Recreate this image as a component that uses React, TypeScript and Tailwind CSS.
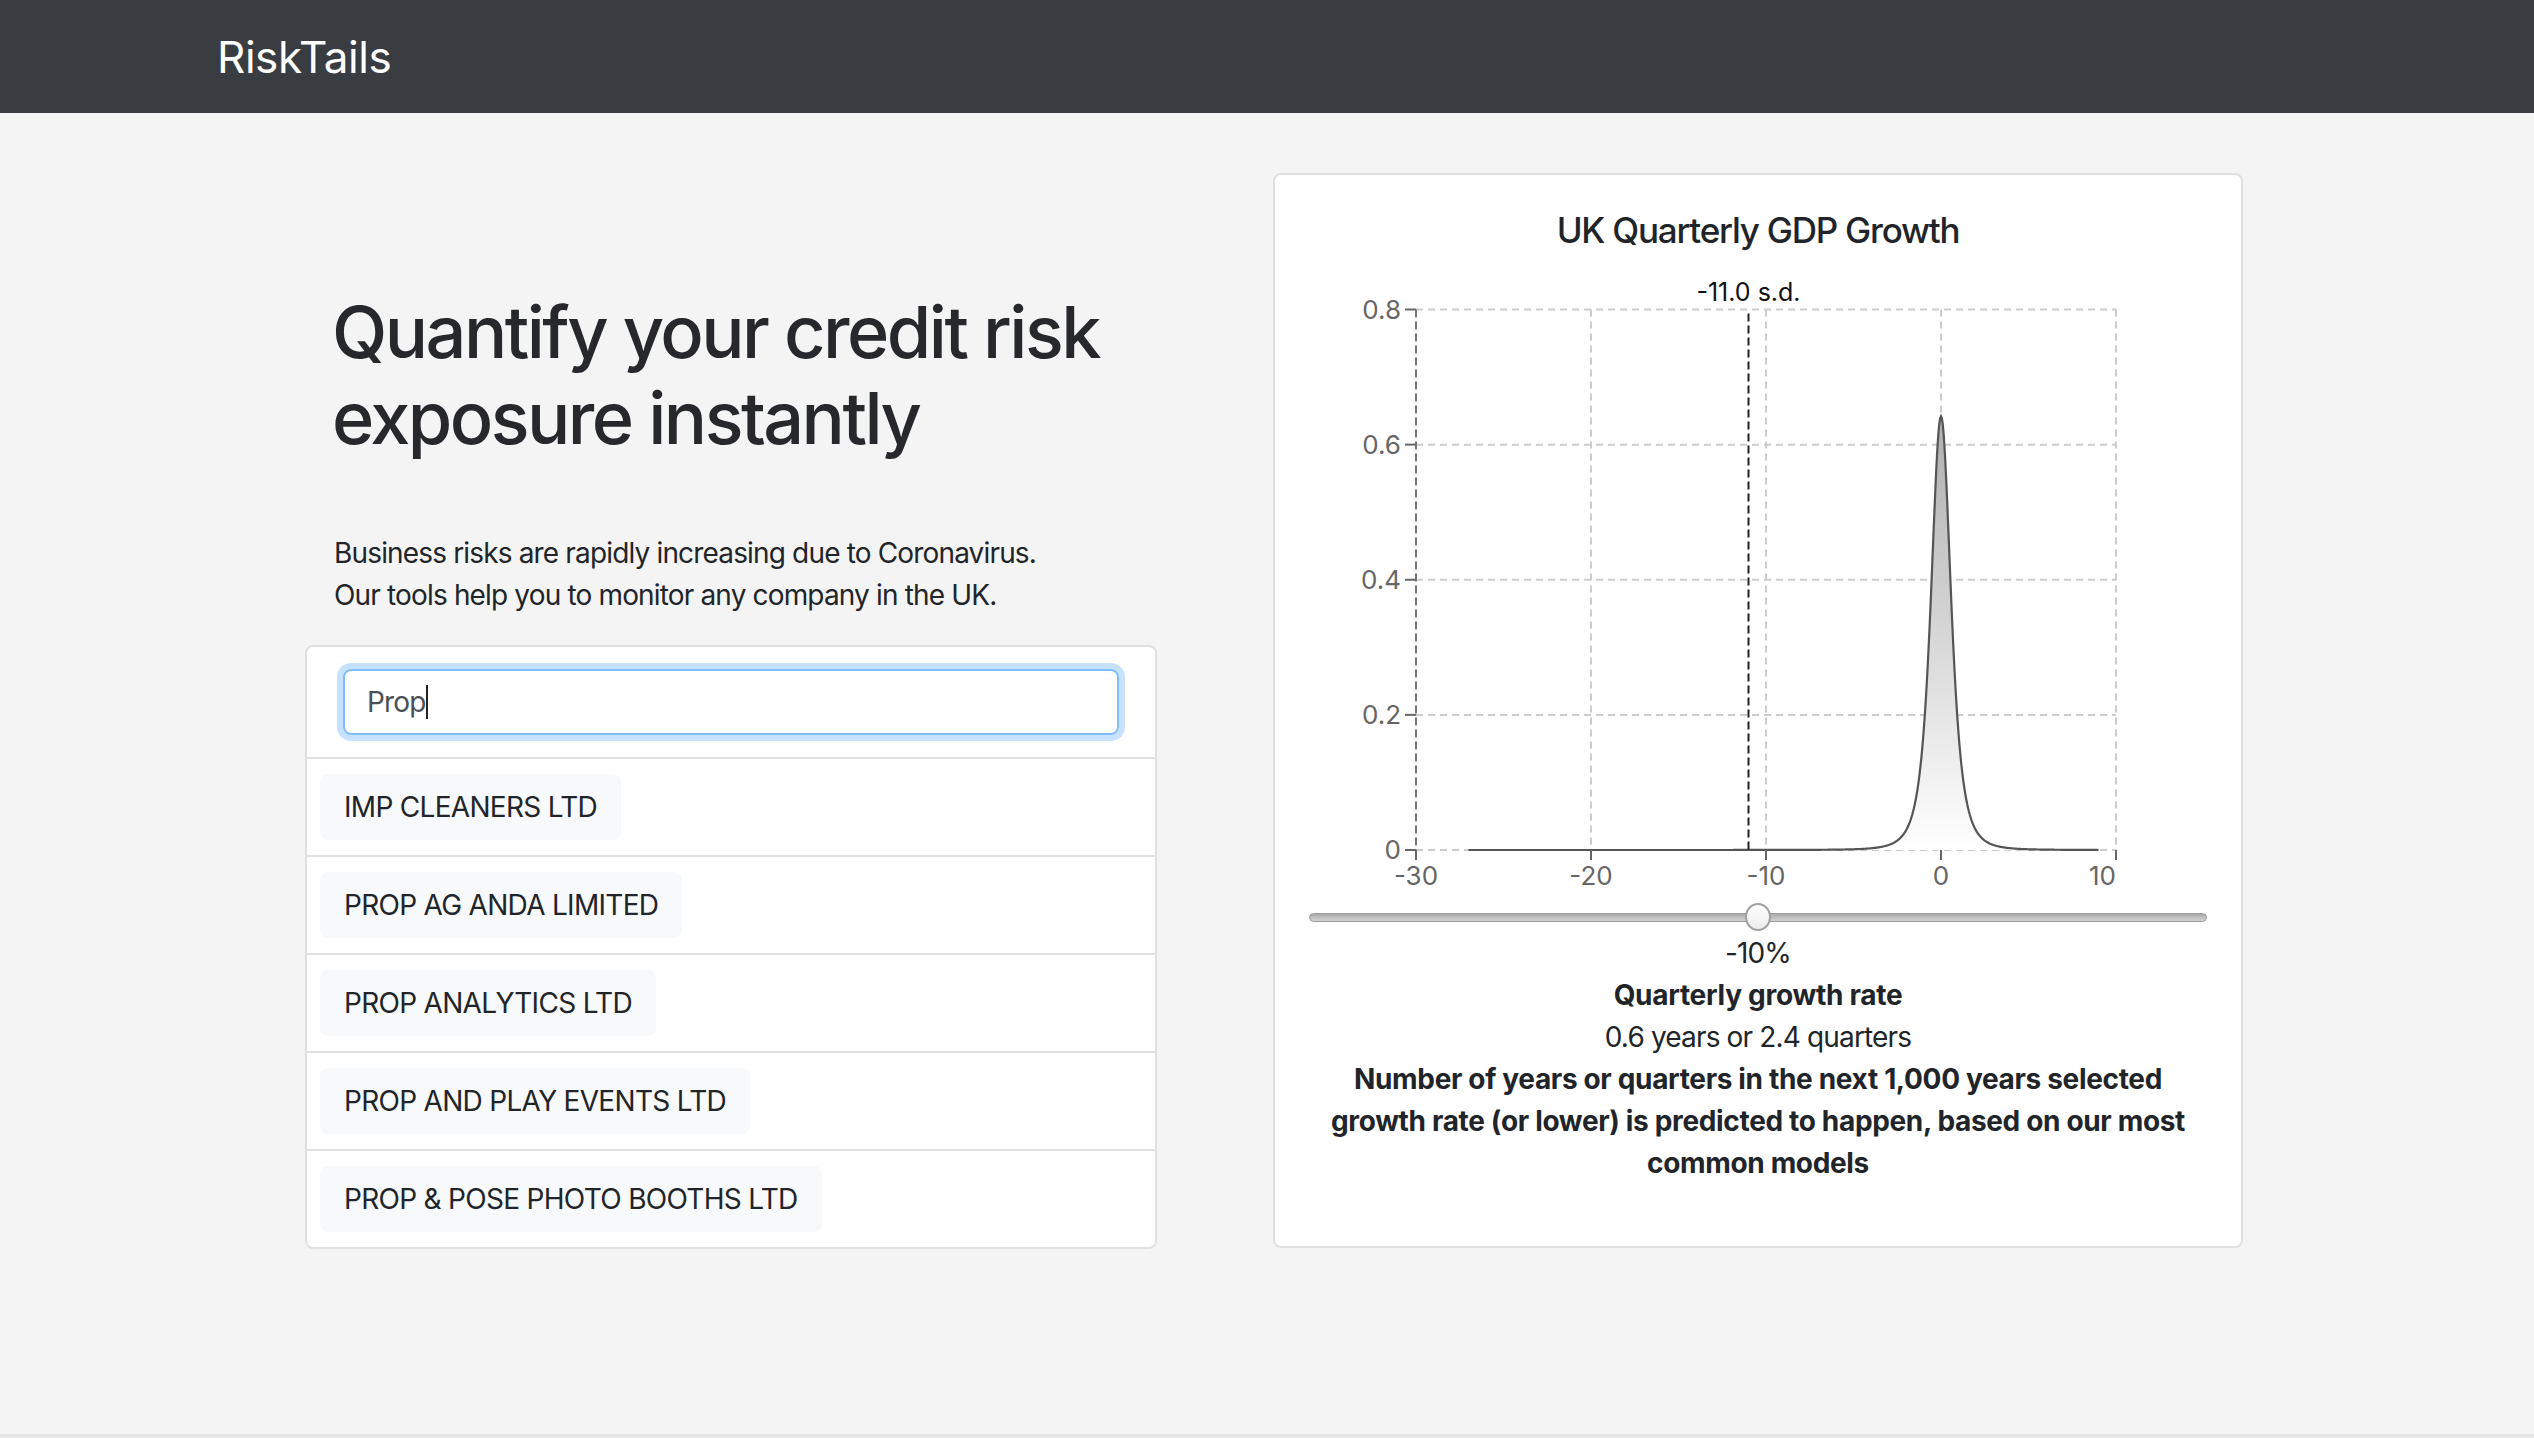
import React from "react";

const X0 = 107;
const X1 = 807;
const Y0 = 49.5;
const Y1 = 590;
const xs = (v: number) => X0 + ((v + 30) / 40) * (X1 - X0);
const ys = (v: number) => Y1 - (v / 0.8) * (Y1 - Y0);

function density(v: number) {
  return 0.642 * Math.pow(1 + (v / 0.6) ** 2 / 3, -2);
}

function Chart() {
  const pts: [number, number][] = [];
  for (let i = 0; i <= 720; i++) {
    const v = -27 + i * 0.05;
    pts.push([xs(v), ys(density(v))]);
  }
  const line = pts.map((p, i) => `${i === 0 ? "M" : "L"}${p[0].toFixed(2)},${p[1].toFixed(2)}`).join(" ");
  const area = `M${xs(-27)},${Y1} ${pts.map((p) => `L${p[0].toFixed(2)},${p[1].toFixed(2)}`).join(" ")} L${xs(9)},${Y1} Z`;
  const xt = [-30, -20, -10, 0, 10];
  const yt = [0, 0.2, 0.4, 0.6, 0.8];
  return (
    <svg width="898" height="642" className="block">
      <defs>
        <linearGradient id="fillg" x1="0" y1={Y0} x2="0" y2={Y1} gradientUnits="userSpaceOnUse">
          <stop offset="0%" stopColor="#9a9a9a" />
          <stop offset="100%" stopColor="#ffffff" />
        </linearGradient>
      </defs>
      {xt.map((t) => (
        <line key={"gx" + t} x1={xs(t)} x2={xs(t)} y1={Y0} y2={Y1} stroke="#cccccc" strokeWidth="2" strokeDasharray="7 5" />
      ))}
      {yt.map((t) => (
        <line key={"gy" + t} x1={X0} x2={X1} y1={ys(t)} y2={ys(t)} stroke="#cccccc" strokeWidth="2" strokeDasharray="7 5" />
      ))}
      <line x1={X0} x2={X0} y1={Y0} y2={Y1} stroke="#777777" strokeWidth="2" strokeDasharray="8 4" />
      <path d={area} fill="url(#fillg)" />
      <path d={line} fill="none" stroke="#555555" strokeWidth="2.2" />
      <line x1={xs(-11)} x2={xs(-11)} y1={Y0 + 4} y2={Y1} stroke="#222222" strokeWidth="2" strokeDasharray="8 4" />
      <text x={xs(-11)} y="41" textAnchor="middle" fontSize="25" fill="#111111" fontFamily="Inter, sans-serif">
        -11.0 s.d.
      </text>
      {yt.map((t) => (
        <g key={"ty" + t}>
          <line x1={X0 - 11} x2={X0} y1={ys(t)} y2={ys(t)} stroke="#666666" strokeWidth="2" />
          <text x={X0 - 15} y={ys(t) + 9} textAnchor="end" fontSize="26" fill="#666666" fontFamily="Inter, sans-serif">
            {t === 0 ? "0" : t.toFixed(1)}
          </text>
        </g>
      ))}
      {xt.map((t, i) => (
        <g key={"tx" + t}>
          <line x1={xs(t)} x2={xs(t)} y1={Y1} y2={Y1 + 10} stroke="#666666" strokeWidth="2" />
          <text
            x={xs(t)}
            y={Y1 + 35}
            textAnchor={i === xt.length - 1 ? "end" : "middle"}
            fontSize="26"
            fill="#666666"
            fontFamily="Inter, sans-serif"
          >
            {t}
          </text>
        </g>
      ))}
    </svg>
  );
}

const companies = [
  "IMP CLEANERS LTD",
  "PROP AG ANDA LIMITED",
  "PROP ANALYTICS LTD",
  "PROP AND PLAY EVENTS LTD",
  "PROP & POSE PHOTO BOOTHS LTD",
];

export default function App() {
  return (
    <div className="min-h-[1438px] flex flex-col bg-[#f4f4f4] font-['Inter',sans-serif] text-[#212529]">
      <nav className="h-[113px] shrink-0 bg-[#393c41] flex items-center pl-[217px]">
        <span className="text-white text-[44px] leading-none tracking-[-0.01em]">RiskTails</span>
      </nav>
      <main className="flex-1 flex items-start pl-[305px] pt-[60px]">
        <section className="w-[852px] shrink-0 pt-[116px]">
          <h1 className="ml-[27px] text-[72px] leading-[1.2] font-medium tracking-[-0.035em] text-[#26282b]">
            Quantify your credit risk exposure instantly
          </h1>
          <p className="ml-[29px] mt-[70px] text-[28px] leading-[42px] tracking-[-0.03em]">
            Business risks are rapidly increasing due to Coronavirus.
            <br />
            Our tools help you to monitor any company in the UK.
          </p>
          <div className="mt-[29px] bg-white border-2 border-[#e0e0e0] rounded-lg">
            <div className="px-[36px] py-[22px] border-b-2 border-[#e0e0e0]">
              <div className="h-[66px] rounded-lg border-2 border-[#80bdff] shadow-[0_0_0_6px_rgba(0,123,255,0.22)] flex items-center pl-[22px] text-[28px] tracking-[-0.03em] text-[#495057]">
                <span>Prop</span>
                <span className="w-[2px] h-[34px] bg-[#222]" />
              </div>
            </div>
            {companies.map((c, i) => (
              <div
                key={c}
                className={
                  i < companies.length - 1
                    ? "py-[15px] pl-[13px] border-b-2 border-[#e0e0e0]"
                    : "py-[15px] pl-[13px]"
                }
              >
                <div className="inline-flex h-[66px] items-center px-[24px] rounded-lg bg-[#f8f9fa] text-[28px] tracking-[-0.025em] text-[#212529]">
                  {c}
                </div>
              </div>
            ))}
          </div>
        </section>
        <section className="ml-[116px] w-[970px] shrink-0 bg-white border-2 border-[#e0e0e0] rounded-lg px-[34px] pt-[34px] pb-[62px]">
          <h2 className="text-center text-[35px] leading-[43px] font-medium tracking-[-0.035em]">UK Quarterly GDP Growth</h2>
          <div className="mt-[8px]">
            <Chart />
          </div>
          <div className="relative h-[30px] flex items-center">
            <div className="w-full h-[9px] rounded-full border border-[#9a9a9a] bg-gradient-to-b from-[#a9a9a9] to-[#d4d4d4]" />
            <div className="absolute left-[436px] top-[1px] w-[26px] h-[28px] rounded-[50%] border-2 border-[#a0a0a0] bg-gradient-to-b from-white to-[#ececec]" />
          </div>
          <div className="text-center text-[28px] leading-[42px]">
            <div className="tracking-[-0.03em]">-10%</div>
            <div className="font-bold tracking-[-0.01em]">Quarterly growth rate</div>
            <div className="tracking-[-0.03em]">0.6 years or 2.4 quarters</div>
            <p className="font-bold tracking-[-0.012em]">
              Number of years or quarters in the next 1,000 years selected
              <br />
              growth rate (or lower) is predicted to happen, based on our most
              <br />
              common models
            </p>
          </div>
        </section>
      </main>
      <div className="h-[4px] shrink-0 bg-[#e6e6e6]" />
    </div>
  );
}
